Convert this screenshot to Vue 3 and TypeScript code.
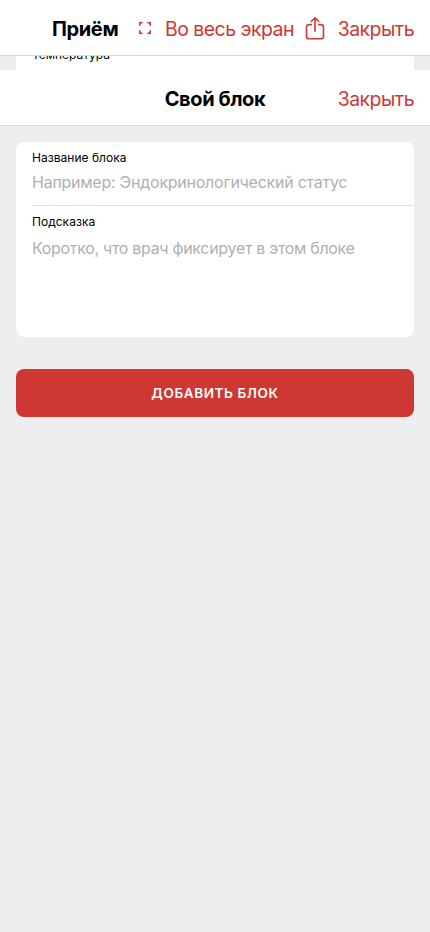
<script setup lang="ts">
import { ref } from 'vue'

const name = ref('')
const hint = ref('')
</script>

<template>
  <div class="screen">
    <header class="bar visit-bar">
      <h1 class="title">Приём</h1>
      <button class="link expand" type="button">
        <svg class="icon-expand" viewBox="0 0 12 12" aria-hidden="true">
          <path d="M0.8 3.7V0.8H3.7M8.3 0.8H11.2V3.7M11.2 8.3V11.2H8.3M3.7 11.2H0.8V8.3" />
        </svg>
        <span class="expand-label">Во весь экран</span>
      </button>
      <button class="link share" type="button" aria-label="Поделиться">
        <svg class="icon-share" viewBox="0 0 20 24" aria-hidden="true">
          <path d="M6.4 7.6H4.1A2.6 2.6 0 0 0 1.5 10.2V19.2A2.6 2.6 0 0 0 4.1 21.8H15.9A2.6 2.6 0 0 0 18.5 19.2V10.2A2.6 2.6 0 0 0 15.9 7.6H13.6M6.3 4.5L10 0.8L13.7 4.5M10 1V14.2" />
        </svg>
      </button>
      <button class="link close" type="button">Закрыть</button>
    </header>

    <div class="peek">
      <div class="peek-card"><span class="peek-label">Температура</span></div>
    </div>

    <section class="modal">
      <header class="bar modal-bar">
        <h2 class="title">Свой блок</h2>
        <button class="link close" type="button">Закрыть</button>
      </header>

      <form class="content" @submit.prevent>
        <div class="card">
          <label class="field name-field">
            <span class="label">Название блока</span>
            <input v-model="name" class="control name-control" placeholder="Например: Эндокринологический статус" />
          </label>
          <label class="field hint-field">
            <span class="label">Подсказка</span>
            <textarea v-model="hint" class="control hint-control" placeholder="Коротко, что врач фиксирует в этом блоке"></textarea>
          </label>
        </div>
        <button class="submit" type="submit">Добавить блок</button>
      </form>
    </section>
  </div>
</template>

<style>
body {
  background: #edeef0;
}
</style>

<style scoped>
.screen {
  display: flex;
  flex-direction: column;
  height: 932px;
  overflow: hidden;
  background: #edeef0;
  color: #000;
  font-family: Inter, "Liberation Sans", sans-serif;
}

.bar {
  display: flex;
  align-items: center;
  box-sizing: border-box;
  height: 56px;
  flex: none;
  padding: 2px 16px 0;
  border-bottom: 1px solid #d9dadc;
  background: #fff;
}

.title {
  margin: 0;
  font-size: 20px;
  font-weight: 700;
  letter-spacing: -0.38px;
  line-height: 24px;
  white-space: nowrap;
}

.link {
  display: flex;
  align-items: center;
  padding: 0;
  border: 0;
  background: none;
  color: #cf3732;
  font: inherit;
  font-size: 19.5px;
  letter-spacing: -0.54px;
  line-height: 24px;
  white-space: nowrap;
}

.visit-bar .title {
  width: 87px;
  padding-left: 36px;
}

.expand-label {
  width: 140px;
  text-align: left;
}

.icon-expand {
  width: 12px;
  height: 12px;
  margin: 0 14px 2px 0;
}

.icon-expand path,
.icon-share path {
  fill: none;
  stroke: #cf3732;
  stroke-width: 1.6;
}

.icon-share path {
  stroke-linecap: round;
  stroke-linejoin: round;
}

.icon-share {
  width: 20px;
  height: 24px;
}

.close {
  margin-left: auto;
}

.peek {
  height: 14px;
  flex: none;
  padding: 0 16px;
  overflow: hidden;
}

.peek-card {
  display: flex;
  align-items: flex-end;
  box-sizing: border-box;
  height: 14px;
  padding: 0 16px 7px;
  background: #fff;
  overflow: hidden;
}

.peek-label,
.label {
  font-size: 12px;
  line-height: 16px;
}

.label {
  letter-spacing: 0.03px;
}

.modal-bar {
  display: grid;
  grid-template-columns: 1fr auto 1fr;
}

.modal-bar .title {
  grid-column: 2;
}

.content {
  padding: 16px;
}

.card {
  height: 195px;
  border-radius: 8px;
  background: #fff;
  overflow: hidden;
}

.field {
  display: flex;
  flex-direction: column;
  box-sizing: border-box;
  margin-left: 16px;
}

.name-field {
  height: 64px;
  padding-top: 8px;
  border-bottom: 1px solid #dedfe1;
}

.hint-field {
  height: 131px;
  padding-top: 8px;
}

.control {
  display: block;
  box-sizing: border-box;
  width: 100%;
  padding: 0;
  border: 0;
  outline: 0;
  background: transparent;
  color: #000;
  font: inherit;
  font-size: 16px;
  letter-spacing: -0.25px;
  line-height: 24px;
  resize: none;
}

.control::placeholder {
  color: #b0b0b0;
  opacity: 1;
}

.name-control {
  height: 24px;
  margin-top: 4px;
}

.hint-control {
  height: 96px;
  margin-top: 6px;
  letter-spacing: -0.31px;
}

.submit {
  display: block;
  width: 100%;
  height: 48px;
  margin-top: 32px;
  padding: 0;
  border: 0;
  border-radius: 8px;
  background: #cf3732;
  color: #fff;
  font: inherit;
  font-size: 13.5px;
  font-weight: 600;
  letter-spacing: 0.6px;
  line-height: 46px;
  text-transform: uppercase;
}
</style>
